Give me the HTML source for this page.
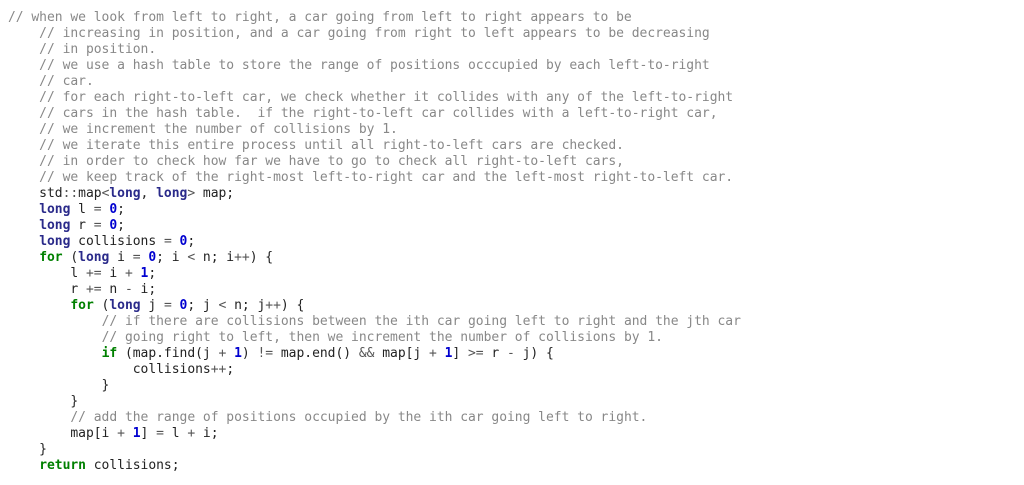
<!DOCTYPE html>
<html><head><style>
html,body{margin:0;background:#fff;width:1024px;height:485px;overflow:hidden}
pre{margin:0;position:absolute;left:8px;top:10px;font-family:"DejaVu Sans Mono","Liberation Mono",monospace;font-size:13px;line-height:16px;color:#222;letter-spacing:-0.03px}
.c{color:#888}
.t{color:#2a2a8a;font-weight:bold}
.n{color:#0000d0;font-weight:bold}
.k{color:#008000;font-weight:bold}
.o{color:#555}
</style></head><body>
<pre><span class="c">// when we look from left to right, a car going from left to right appears to be
    // increasing in position, and a car going from right to left appears to be decreasing
    // in position.
    // we use a hash table to store the range of positions occcupied by each left-to-right
    // car.
    // for each right-to-left car, we check whether it collides with any of the left-to-right
    // cars in the hash table.  if the right-to-left car collides with a left-to-right car,
    // we increment the number of collisions by 1.
    // we iterate this entire process until all right-to-left cars are checked.
    // in order to check how far we have to go to check all right-to-left cars,
    // we keep track of the right-most left-to-right car and the left-most right-to-left car.</span>
    std<span class="o">::</span>map<span class="o">&lt;</span><span class="t">long</span>, <span class="t">long</span><span class="o">&gt;</span> map;
    <span class="t">long</span> l <span class="o">=</span> <span class="n">0</span>;
    <span class="t">long</span> r <span class="o">=</span> <span class="n">0</span>;
    <span class="t">long</span> collisions <span class="o">=</span> <span class="n">0</span>;
    <span class="k">for</span> (<span class="t">long</span> i <span class="o">=</span> <span class="n">0</span>; i <span class="o">&lt;</span> n; i<span class="o">++</span>) {
        l <span class="o">+=</span> i <span class="o">+</span> <span class="n">1</span>;
        r <span class="o">+=</span> n <span class="o">-</span> i;
        <span class="k">for</span> (<span class="t">long</span> j <span class="o">=</span> <span class="n">0</span>; j <span class="o">&lt;</span> n; j<span class="o">++</span>) {
            <span class="c">// if there are collisions between the ith car going left to right and the jth car</span>
            <span class="c">// going right to left, then we increment the number of collisions by 1.</span>
            <span class="k">if</span> (map.find(j <span class="o">+</span> <span class="n">1</span>) <span class="o">!=</span> map.end() <span class="o">&amp;&amp;</span> map[j <span class="o">+</span> <span class="n">1</span>] <span class="o">&gt;=</span> r <span class="o">-</span> j) {
                collisions<span class="o">++</span>;
            }
        }
        <span class="c">// add the range of positions occupied by the ith car going left to right.</span>
        map[i <span class="o">+</span> <span class="n">1</span>] <span class="o">=</span> l <span class="o">+</span> i;
    }
    <span class="k">return</span> collisions;</pre>
</body></html>
